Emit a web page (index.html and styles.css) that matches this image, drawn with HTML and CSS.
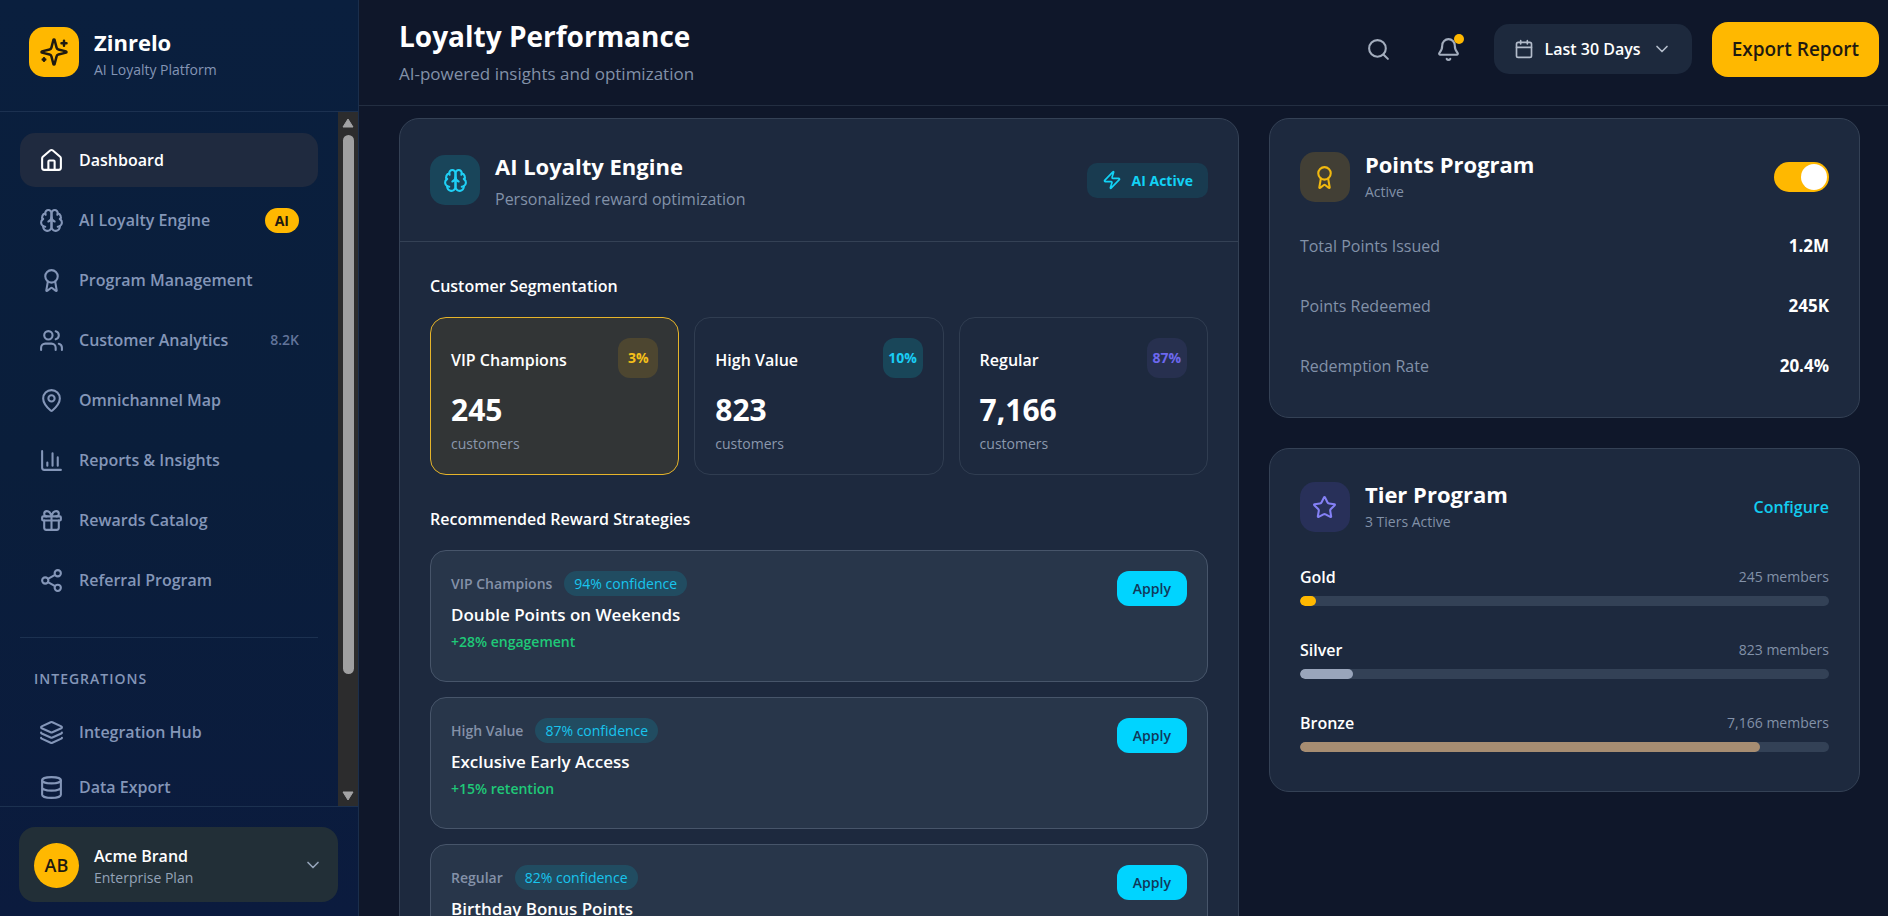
FILE: index.html
```html
<!DOCTYPE html>
<html lang="en">
<head>
<meta charset="utf-8">
<title>Zinrelo – Loyalty Performance</title>
<link rel="stylesheet" href="styles.css">
</head>
<body>
<svg class="sprite" aria-hidden="true">
  <symbol id="sparkles" viewBox="0 0 24 24"><path d="M9.94 15.5A2 2 0 0 0 8.5 14.06l-6.14-1.58a.5.5 0 0 1 0-.96L8.5 9.94A2 2 0 0 0 9.94 8.5l1.58-6.14a.5.5 0 0 1 .96 0l1.58 6.14a2 2 0 0 0 1.44 1.44l6.14 1.58a.5.5 0 0 1 0 .96l-6.14 1.58a2 2 0 0 0-1.44 1.44l-1.58 6.14a.5.5 0 0 1-.96 0zM20 3v4M22 5h-4M4 17v2M5 18H3"/></symbol>
  <symbol id="home" viewBox="0 0 24 24"><path d="M15 21v-8a1 1 0 0 0-1-1h-4a1 1 0 0 0-1 1v8"/><path d="M3 10a2 2 0 0 1 .71-1.53l7-6a2 2 0 0 1 2.58 0l7 6A2 2 0 0 1 21 10v9a2 2 0 0 1-2 2H5a2 2 0 0 1-2-2z"/></symbol>
  <symbol id="brain" viewBox="0 0 24 24"><path d="M12 5a3 3 0 1 0-5.997.125 4 4 0 0 0-2.526 5.77 4 4 0 0 0 .556 6.588A4 4 0 1 0 12 18Z"/><path d="M12 5a3 3 0 1 1 5.997.125 4 4 0 0 1 2.526 5.77 4 4 0 0 1-.556 6.588A4 4 0 1 1 12 18Z"/><path d="M15 13a4.500 4.500 0 0 1-3-4 4.500 4.500 0 0 1-3 4M17.599 6.500a3 3 0 0 0 .399-1.375M6.003 5.125A3 3 0 0 0 6.401 6.500M3.477 10.896a4 4 0 0 1 .585-.396M19.938 10.500a4 4 0 0 1 .585.396M6 18a4 4 0 0 1-1.967-.516M19.967 17.484A4 4 0 0 1 18 18"/></symbol>
  <symbol id="award" viewBox="0 0 24 24"><path d="m15.477 12.890 1.515 8.526a.5.5 0 0 1-.810.470l-3.580-2.687a1 1 0 0 0-1.197 0l-3.586 2.686a.5.5 0 0 1-.810-.469l1.514-8.526"/><circle cx="12" cy="8" r="6"/></symbol>
  <symbol id="users" viewBox="0 0 24 24"><path d="M16 21v-2a4 4 0 0 0-4-4H6a4 4 0 0 0-4 4v2"/><circle cx="9" cy="7" r="4"/><path d="M22 21v-2a4 4 0 0 0-3-3.870M16 3.130a4 4 0 0 1 0 7.750"/></symbol>
  <symbol id="pin" viewBox="0 0 24 24"><path d="M20 10c0 4.993-5.539 10.193-7.399 11.799a1 1 0 0 1-1.202 0C9.539 20.193 4 14.993 4 10a8 8 0 0 1 16 0"/><circle cx="12" cy="10" r="3"/></symbol>
  <symbol id="chart" viewBox="0 0 24 24"><path d="M3 3v16a2 2 0 0 0 2 2h16M8 17v-3M13 17V5M18 17V9"/></symbol>
  <symbol id="gift" viewBox="0 0 24 24"><rect x="3" y="8" width="18" height="4" rx="1"/><path d="M12 8v13M19 12v7a2 2 0 0 1-2 2H7a2 2 0 0 1-2-2v-7M7.500 8a2.500 2.500 0 0 1 0-5A4.800 8 0 0 1 12 8a4.800 8 0 0 1 4.500-5 2.500 2.500 0 0 1 0 5"/></symbol>
  <symbol id="share" viewBox="0 0 24 24"><circle cx="18" cy="5" r="3"/><circle cx="6" cy="12" r="3"/><circle cx="18" cy="19" r="3"/><path d="m8.590 13.510 6.830 3.980M15.410 6.510l-6.820 3.980"/></symbol>
  <symbol id="layers" viewBox="0 0 24 24"><path d="M12.830 2.180a2 2 0 0 0-1.660 0L2.600 6.080a1 1 0 0 0 0 1.830l8.580 3.910a2 2 0 0 0 1.660 0l8.580-3.900a1 1 0 0 0 0-1.830z"/><path d="M2 12a1 1 0 0 0 .580.910l8.600 3.910a2 2 0 0 0 1.650 0l8.580-3.900A1 1 0 0 0 22 12M2 17a1 1 0 0 0 .580.910l8.600 3.910a2 2 0 0 0 1.650 0l8.580-3.900A1 1 0 0 0 22 17"/></symbol>
  <symbol id="database" viewBox="0 0 24 24"><ellipse cx="12" cy="5" rx="9" ry="3"/><path d="M3 5v14a9 3 0 0 0 18 0V5M3 12a9 3 0 0 0 18 0"/></symbol>
  <symbol id="chevron" viewBox="0 0 24 24"><path d="m6 9 6 6 6-6"/></symbol>
  <symbol id="search" viewBox="0 0 24 24"><circle cx="11" cy="11" r="8"/><path d="m21 21-4.300-4.300"/></symbol>
  <symbol id="bell" viewBox="0 0 24 24"><path d="M10.268 21a2 2 0 0 0 3.464 0M3.262 15.326A1 1 0 0 0 4 17h16a1 1 0 0 0 .740-1.673C19.410 13.956 18 12.499 18 8A6 6 0 0 0 6 8c0 4.499-1.411 5.956-2.738 7.326"/></symbol>
  <symbol id="calendar" viewBox="0 0 24 24"><path d="M8 2v4M16 2v4M3 10h18"/><rect x="3" y="4" width="18" height="18" rx="2"/></symbol>
  <symbol id="zap" viewBox="0 0 24 24"><path d="M4 14a1 1 0 0 1-.780-1.630l9.900-10.200a.5.5 0 0 1 .860.460l-1.920 6.020A1 1 0 0 0 13 10h7a1 1 0 0 1 .780 1.630l-9.900 10.200a.5.5 0 0 1-.860-.460l1.920-6.020A1 1 0 0 0 11 14z"/></symbol>
  <symbol id="star" viewBox="0 0 24 24"><path d="M11.525 2.295a.53.53 0 0 1 .950 0l2.310 4.679a2.123 2.123 0 0 0 1.595 1.160l5.166.756a.53.53 0 0 1 .294.904l-3.736 3.638a2.123 2.123 0 0 0-.611 1.878l.882 5.140a.53.53 0 0 1-.771.560l-4.618-2.428a2.122 2.122 0 0 0-1.973 0L6.396 21.010a.53.53 0 0 1-.770-.560l.881-5.139a2.122 2.122 0 0 0-.611-1.879L2.160 9.795a.53.53 0 0 1 .294-.906l5.165-.755a2.122 2.122 0 0 0 1.597-1.160z"/></symbol>
</svg>

<div class="app">
  <aside class="sidebar">
    <div class="brand">
      <span class="brand-logo"><svg class="icon icon-lg"><use href="#sparkles"/></svg></span>
      <div>
        <div class="brand-name">Zinrelo</div>
        <div class="brand-tag">AI Loyalty Platform</div>
      </div>
    </div>
    <div class="nav-wrap">
      <nav class="nav">
        <ul class="nav-list">
          <li><a class="nav-item active" href="#"><svg class="icon"><use href="#home"/></svg><span>Dashboard</span></a></li>
          <li><a class="nav-item" href="#"><svg class="icon"><use href="#brain"/></svg><span>AI Loyalty Engine</span><span class="nav-badge">AI</span></a></li>
          <li><a class="nav-item" href="#"><svg class="icon"><use href="#award"/></svg><span>Program Management</span></a></li>
          <li><a class="nav-item" href="#"><svg class="icon"><use href="#users"/></svg><span>Customer Analytics</span><span class="nav-count">8.2K</span></a></li>
          <li><a class="nav-item" href="#"><svg class="icon"><use href="#pin"/></svg><span>Omnichannel Map</span></a></li>
          <li><a class="nav-item" href="#"><svg class="icon"><use href="#chart"/></svg><span>Reports &amp; Insights</span></a></li>
          <li><a class="nav-item" href="#"><svg class="icon"><use href="#gift"/></svg><span>Rewards Catalog</span></a></li>
          <li><a class="nav-item" href="#"><svg class="icon"><use href="#share"/></svg><span>Referral Program</span></a></li>
        </ul>
        <div class="nav-section">
          <h2 class="nav-heading">INTEGRATIONS</h2>
          <ul class="nav-list compact">
            <li><a class="nav-item" href="#"><svg class="icon"><use href="#layers"/></svg><span>Integration Hub</span></a></li>
            <li><a class="nav-item" href="#"><svg class="icon"><use href="#database"/></svg><span>Data Export</span></a></li>
          </ul>
        </div>
      </nav>
      <div class="scrollbar" aria-hidden="true">
        <svg class="scroll-arrow" viewBox="0 0 12 10"><path d="M6 1 11 9H1z"/></svg>
        <div class="scroll-track"><div class="scroll-thumb"></div></div>
        <svg class="scroll-arrow" viewBox="0 0 12 10"><path d="M6 9 1 1h10z"/></svg>
      </div>
    </div>
    <div class="account">
      <button class="account-card" type="button">
        <span class="avatar">AB</span>
        <span class="account-text"><span class="account-name">Acme Brand</span><span class="account-plan">Enterprise Plan</span></span>
        <svg class="icon icon-sm"><use href="#chevron"/></svg>
      </button>
    </div>
  </aside>

  <div class="main">
    <header class="topbar">
      <div>
        <h1 class="page-title">Loyalty Performance</h1>
        <p class="page-sub">AI-powered insights and optimization</p>
      </div>
      <div class="actions">
        <button class="icon-btn" type="button" aria-label="Search"><svg class="icon"><use href="#search"/></svg></button>
        <button class="icon-btn" type="button" aria-label="Notifications"><svg class="icon"><use href="#bell"/></svg><span class="dot"></span></button>
        <button class="range-btn" type="button"><svg class="icon icon-sm"><use href="#calendar"/></svg><span>Last 30 Days</span><svg class="icon icon-sm"><use href="#chevron"/></svg></button>
        <button class="export-btn" type="button">Export Report</button>
      </div>
    </header>

    <main class="content">
      <section class="card engine">
        <div class="engine-head">
          <span class="tile cyan"><svg class="icon"><use href="#brain"/></svg></span>
          <div class="head-text">
            <h2 class="card-title">AI Loyalty Engine</h2>
            <p class="card-desc">Personalized reward optimization</p>
          </div>
          <span class="status"><svg class="icon icon-sm"><use href="#zap"/></svg>AI Active</span>
        </div>
        <div class="engine-body">
          <h3 class="block-title">Customer Segmentation</h3>
          <div class="segments">
            <article class="segment selected">
              <div class="segment-top"><span class="segment-name">VIP Champions</span><span class="pct gold">3%</span></div>
              <div class="segment-num">245</div>
              <div class="segment-unit">customers</div>
            </article>
            <article class="segment">
              <div class="segment-top"><span class="segment-name">High Value</span><span class="pct cyan">10%</span></div>
              <div class="segment-num">823</div>
              <div class="segment-unit">customers</div>
            </article>
            <article class="segment">
              <div class="segment-top"><span class="segment-name">Regular</span><span class="pct violet">87%</span></div>
              <div class="segment-num">7,166</div>
              <div class="segment-unit">customers</div>
            </article>
          </div>
          <h3 class="block-title second">Recommended Reward Strategies</h3>
          <div class="strategies">
            <article class="strategy">
              <div>
                <div class="strategy-meta"><span>VIP Champions</span><span class="pill">94% confidence</span></div>
                <h4 class="strategy-title">Double Points on Weekends</h4>
                <p class="strategy-gain">+28% engagement</p>
              </div>
              <button class="apply" type="button">Apply</button>
            </article>
            <article class="strategy">
              <div>
                <div class="strategy-meta"><span>High Value</span><span class="pill">87% confidence</span></div>
                <h4 class="strategy-title">Exclusive Early Access</h4>
                <p class="strategy-gain">+15% retention</p>
              </div>
              <button class="apply" type="button">Apply</button>
            </article>
            <article class="strategy">
              <div>
                <div class="strategy-meta"><span>Regular</span><span class="pill">82% confidence</span></div>
                <h4 class="strategy-title">Birthday Bonus Points</h4>
              </div>
              <button class="apply" type="button">Apply</button>
            </article>
          </div>
        </div>
      </section>

      <div class="side">
        <section class="card program">
          <div class="program-head">
            <span class="tile gold"><svg class="icon"><use href="#award"/></svg></span>
            <div class="head-text">
              <h2 class="card-title">Points Program</h2>
              <p class="card-note">Active</p>
            </div>
            <input class="switch" type="checkbox" role="switch" aria-label="Points Program" checked>
          </div>
          <dl class="stats">
            <div class="stat"><dt>Total Points Issued</dt><dd>1.2M</dd></div>
            <div class="stat"><dt>Points Redeemed</dt><dd>245K</dd></div>
            <div class="stat"><dt>Redemption Rate</dt><dd>20.4%</dd></div>
          </dl>
        </section>
        <section class="card program">
          <div class="program-head">
            <span class="tile violet"><svg class="icon"><use href="#star"/></svg></span>
            <div class="head-text">
              <h2 class="card-title">Tier Program</h2>
              <p class="card-note">3 Tiers Active</p>
            </div>
            <a class="configure" href="#">Configure</a>
          </div>
          <div class="tiers">
            <div>
              <div class="tier-top"><span>Gold</span><span class="tier-count">245 members</span></div>
              <div class="bar"><div class="fill gold" style="width:3%"></div></div>
            </div>
            <div>
              <div class="tier-top"><span>Silver</span><span class="tier-count">823 members</span></div>
              <div class="bar"><div class="fill silver" style="width:10%"></div></div>
            </div>
            <div>
              <div class="tier-top"><span>Bronze</span><span class="tier-count">7,166 members</span></div>
              <div class="bar"><div class="fill bronze" style="width:87%"></div></div>
            </div>
          </div>
        </section>
      </div>
    </main>
  </div>
</div>
</body>
</html>
```
FILE: styles.css
```css
* { box-sizing: border-box; }
body {
  margin: 0;
  font-family: "Segoe UI", "Open Sans", "Noto Sans", sans-serif;
  font-size: 16px;
  line-height: 24px;
  color: #fff;
  background: #0f172a;
}
h1, h2, h3, h4, p, ul, dl, dd { margin: 0; padding: 0; }
ul { list-style: none; }
a { color: inherit; text-decoration: none; }
button { font: inherit; color: inherit; border: 0; background: none; padding: 0; cursor: pointer; }

.sprite { position: absolute; width: 0; height: 0; }
.icon {
  flex: none;
  width: 25px;
  height: 25px;
  fill: none;
  stroke: currentColor;
  stroke-width: 2;
  stroke-linecap: round;
  stroke-linejoin: round;
}
.icon-lg { width: 30px; height: 30px; }
.icon-sm { width: 20px; height: 20px; }

.app { display: flex; height: 100vh; overflow: hidden; }

/* Sidebar */
.sidebar {
  flex: none;
  width: 359px;
  display: flex;
  flex-direction: column;
  background: linear-gradient(#0a1f3e, #0a1e3b 50%, #0b1b3e);
  border-right: 1px solid #1b2e4b;
}
.brand {
  display: flex;
  gap: 15px;
  padding: 27px 29px 28px;
  border-bottom: 1px solid #1c3150;
}
.brand-logo {
  display: grid;
  place-items: center;
  width: 50px;
  height: 50px;
  border-radius: 15px;
  background: #ffb800;
  color: #1f1a10;
}
.brand-name { font-size: 22px; line-height: 30px; font-weight: 700; }
.brand-tag { font-size: 14px; line-height: 26px; color: #8495b5; }

.nav-wrap { flex: 1; min-height: 0; display: flex; }
.nav { flex: 1; overflow: hidden; padding: 21px 20px 0; }
.nav-list { display: grid; gap: 6px; }
.nav-list.compact { gap: 1px; }
.nav-item {
  display: flex;
  align-items: center;
  gap: 15px;
  height: 54px;
  padding: 0 19px;
  border-radius: 15px;
  font-weight: 600;
  color: #8496b8;
}
.nav-item.active { background: #1f2a3f; color: #fff; }
.nav-badge {
  margin-left: auto;
  padding: 0 10px;
  border-radius: 13px;
  background: #ffb800;
  color: #1f1a10;
  font-size: 14px;
  line-height: 25px;
  font-weight: 700;
}
.nav-count { margin-left: auto; font-size: 14px; color: #62749a; }
.nav-section { margin-top: 30px; padding-top: 30px; border-top: 1px solid #1c3150; }
.nav-heading {
  padding: 0 14px 15px;
  font-size: 14px;
  line-height: 22px;
  font-weight: 600;
  letter-spacing: 1px;
  color: #8496b8;
}

.scrollbar {
  flex: none;
  width: 20px;
  display: flex;
  flex-direction: column;
  align-items: center;
  justify-content: space-between;
  padding: 6px 0 5px;
  background: #2c2c2d;
}
.scroll-arrow { width: 12px; height: 10px; fill: #a3a3a5; stroke: #a3a3a5; stroke-linejoin: round; }
.scroll-track { flex: 1; width: 11px; padding: 7px 0; }
.scroll-thumb { height: 83%; border-radius: 6px; background: #a0a0a1; }

.account { padding: 20px 20px 14px 19px; border-top: 1px solid #1c3150; }
.account-card {
  display: flex;
  align-items: center;
  gap: 15px;
  width: 100%;
  padding: 15px 15px 14px;
  border-radius: 16px;
  background: #222f37;
  text-align: left;
  color: #94a3b8;
}
.avatar {
  display: grid;
  place-items: center;
  width: 45px;
  height: 45px;
  border-radius: 50%;
  background: #ffb800;
  color: #1f1a10;
  font-size: 18px;
  font-weight: 600;
}
.account-text { flex: 1; display: grid; padding-top: 2px; }
.account-name { font-weight: 600; color: #fff; }
.account-plan { font-size: 14px; line-height: 20px; }

/* Main column */
.main { flex: 1; min-width: 0; display: flex; flex-direction: column; }
.topbar {
  flex: none;
  display: flex;
  justify-content: space-between;
  padding: 16px 9px 13px 40px;
  border-bottom: 1px solid #232e41;
}
.page-title { font-size: 28px; line-height: 40px; font-weight: 700; }
.page-sub { font-size: 17px; line-height: 36px; color: #8291a8; }
.actions { display: flex; align-items: center; gap: 20px; height: 66px; }
.icon-btn { position: relative; display: grid; place-items: center; width: 50px; height: 50px; color: #a3adbd; }
.dot { position: absolute; top: 10px; right: 10px; width: 10px; height: 10px; border-radius: 50%; background: #ffb800; }
.range-btn {
  display: flex;
  align-items: center;
  gap: 11px;
  height: 50px;
  padding: 0 20px;
  border-radius: 15px;
  background: #1d293d;
  font-weight: 600;
}
.range-btn .icon { color: #b3bccb; }
.export-btn {
  height: 55px;
  padding: 0 20px;
  border-radius: 16px;
  background: #ffb800;
  color: #1f1a10;
  font-size: 19px;
  font-weight: 600;
}

.content {
  flex: 1;
  min-height: 0;
  overflow: hidden;
  display: grid;
  grid-template-columns: 27fr 19fr;
  align-items: start;
  gap: 30px;
  padding: 12px 28px 0 40px;
}
.card { border: 1px solid #344155; border-radius: 20px; background: #1d293e; }
.tile { flex: none; display: grid; place-items: center; width: 50px; height: 50px; border-radius: 15px; }
.tile.cyan { background: #19455a; color: #1fd0f5; }
.tile.gold { background: #423f35; color: #f2b90f; }
.tile.violet { background: #283059; color: #8480f5; }
.head-text { flex: 1; }
.card-title { font-size: 22px; line-height: 30px; font-weight: 700; }
.card-desc { line-height: 36px; color: #8291a8; }
.card-note { font-size: 14px; line-height: 26px; color: #8291a8; }

.engine-head {
  display: flex;
  align-items: center;
  gap: 15px;
  height: 123px;
  padding: 0 30px;
  border-bottom: 1px solid #344155;
}
.engine-head .head-text { padding-top: 8px; }
.status {
  display: flex;
  align-items: center;
  gap: 10px;
  padding: 0 15px;
  border-radius: 10px;
  background: #193b50;
  color: #12d2f5;
  font-size: 14px;
  line-height: 35px;
  font-weight: 700;
}
.engine-body { padding: 30px; }
.block-title { font-size: 16px; line-height: 28px; font-weight: 600; }
.block-title.second { margin-top: 30px; }
.segments { display: grid; grid-template-columns: repeat(3, 1fr); gap: 15px; margin-top: 17px; }
.segment { padding: 20px 20px 16px; border: 1px solid #303d51; border-radius: 16px; }
.segment.selected { border-color: #e6b42a; background: #323536; }
.segment-top { display: flex; align-items: center; justify-content: space-between; }
.segment-name { padding-top: 4px; font-weight: 600; }
.pct { display: grid; place-items: center; width: 40px; height: 40px; border-radius: 12px; font-size: 14px; font-weight: 700; }
.pct.gold { background: #4d4630; color: #f5c01a; }
.pct.cyan { background: #194659; color: #19cdf5; }
.pct.violet { background: #27304f; color: #6d68ee; }
.segment-num { margin-top: 12px; font-size: 30px; line-height: 40px; font-weight: 700; }
.segment-unit { font-size: 14px; line-height: 28px; color: #8b98ad; }

.strategies { display: grid; gap: 15px; margin-top: 17px; }
.strategy {
  display: flex;
  align-items: flex-start;
  justify-content: space-between;
  min-height: 132px;
  padding: 20px;
  border: 1px solid #47556a;
  border-radius: 16px;
  background: #28364a;
}
.strategy-meta { display: flex; align-items: center; gap: 12px; font-size: 14px; line-height: 25px; font-weight: 600; color: #8491a8; }
.pill { padding: 0 10px; border-radius: 13px; background: #214c61; color: #18c5ee; font-weight: 400; }
.strategy-title { margin-top: 5px; font-size: 17px; line-height: 28px; font-weight: 600; }
.strategy-gain { font-size: 14px; line-height: 25px; font-weight: 600; color: #1fc978; }
.apply {
  height: 35px;
  padding: 0 16px;
  border-radius: 12px;
  background: #00d4ff;
  color: #11385a;
  font-size: 14px;
  font-weight: 600;
}

.side { display: grid; gap: 30px; }
.program { padding: 30px 30px 21px; }
.program-head { display: flex; align-items: center; gap: 15px; }
.switch {
  appearance: none;
  display: flex;
  justify-content: flex-end;
  width: 55px;
  height: 30px;
  margin: 0;
  padding: 2px;
  border-radius: 15px;
  background: #ffb800;
}
.switch::before { content: ""; width: 26px; height: 26px; border-radius: 50%; background: #fff; }
.switch:not(:checked) { justify-content: flex-start; background: #344155; }
.stats { display: grid; margin-top: 11px; }
.stat { display: flex; align-items: center; justify-content: space-between; height: 60px; }
.stat dt { color: #8291a8; }
.stat dd { font-size: 17px; font-weight: 700; }
.configure { font-weight: 600; color: #12cdf0; }
.tiers { display: grid; gap: 30px; margin-top: 28px; padding-bottom: 18px; }
.tier-top { display: flex; justify-content: space-between; line-height: 28px; font-weight: 600; }
.tier-count { font-size: 14px; font-weight: 400; color: #8291a8; }
.bar { height: 10px; margin-top: 5px; border-radius: 5px; background: #334156; overflow: hidden; }
.fill { height: 100%; border-radius: 5px; }
.fill.gold { background: #ffb800; }
.fill.silver { background: #99a5bb; }
.fill.bronze { background: #a78d72; }
```
